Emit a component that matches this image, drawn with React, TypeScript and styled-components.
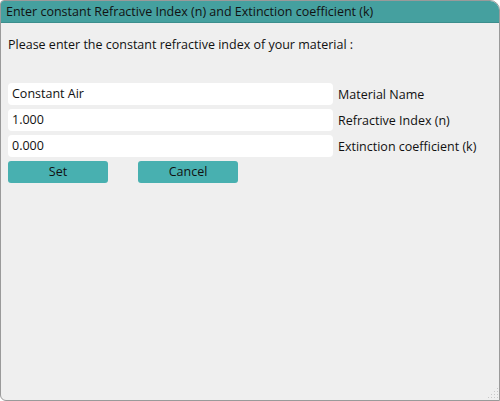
import React from "react";
import styled, { createGlobalStyle } from "styled-components";

const Global = createGlobalStyle`
  html, body { margin: 0; padding: 0; background: #ffffff; }
  body { font-family: "Open Sans", "Noto Sans", sans-serif; }
  * { box-sizing: border-box; }
`;

const Window = styled.div`
  width: 500px;
  height: 401px;
  display: flex;
  flex-direction: column;
  background: #efefef;
  border: 1px solid #9a9a9a;
  border-radius: 4px 10px 0 6px;
  overflow: hidden;
  position: relative;
`;

const TitleBar = styled.div`
  height: 22px;
  flex: none;
  background: #45a09f;
  border-bottom: 1px solid #3b8e8d;
  color: #111;
  font-size: 12.5px;
  line-height: 21px;
  padding-left: 5px;
  white-space: nowrap;
`;

const Body = styled.div`
  display: flex;
  flex-direction: column;
  padding: 13px 7px 0 7px;
`;

const Prompt = styled.div`
  font-size: 12.5px;
  color: #111;
  line-height: 17px;
  margin-bottom: 30px;
`;

const Row = styled.div`
  display: flex;
  align-items: center;
  gap: 5px;
  margin-bottom: 4px;
`;

const Field = styled.div`
  width: 325px;
  height: 22px;
  background: #ffffff;
  border-radius: 4px;
  font-size: 12.5px;
  line-height: 22px;
  padding-left: 4px;
  color: #111;
`;

const Label = styled.div`
  font-size: 12.5px;
  color: #111;
`;

const Buttons = styled.div`
  display: flex;
  gap: 30px;
  margin-top: 0px;
`;

const Button = styled.div`
  width: 100px;
  height: 22px;
  background: #48b0b0;
  border-radius: 3px;
  font-size: 12.5px;
  line-height: 22px;
  text-align: center;
  color: #111;
`;

const Grip = styled.svg`
  position: absolute;
  right: 0;
  bottom: 0;
`;

export default function App() {
  return (
    <>
      <Global />
      <Window>
        <TitleBar>Enter constant Refractive Index (n) and Extinction coefficient (k)</TitleBar>
        <Body>
          <Prompt>Please enter the constant refractive index of your material :</Prompt>
          <Row>
            <Field>Constant Air</Field>
            <Label>Material Name</Label>
          </Row>
          <Row>
            <Field>1.000</Field>
            <Label>Refractive Index (n)</Label>
          </Row>
          <Row>
            <Field>0.000</Field>
            <Label>Extinction coefficient (k)</Label>
          </Row>
          <Buttons>
            <Button>Set</Button>
            <Button>Cancel</Button>
          </Buttons>
        </Body>
        <Grip width="14" height="14" viewBox="0 0 14 14">
          {[
            [12, 2], [12, 5], [12, 8], [12, 11], [9, 5], [9, 8], [9, 11], [6, 8], [6, 11], [3, 11],
          ].map(([x, y], i) => (
            <rect key={i} x={x} y={y} width="1" height="1" fill="#c8c8c8" />
          ))}
        </Grip>
      </Window>
    </>
  );
}
